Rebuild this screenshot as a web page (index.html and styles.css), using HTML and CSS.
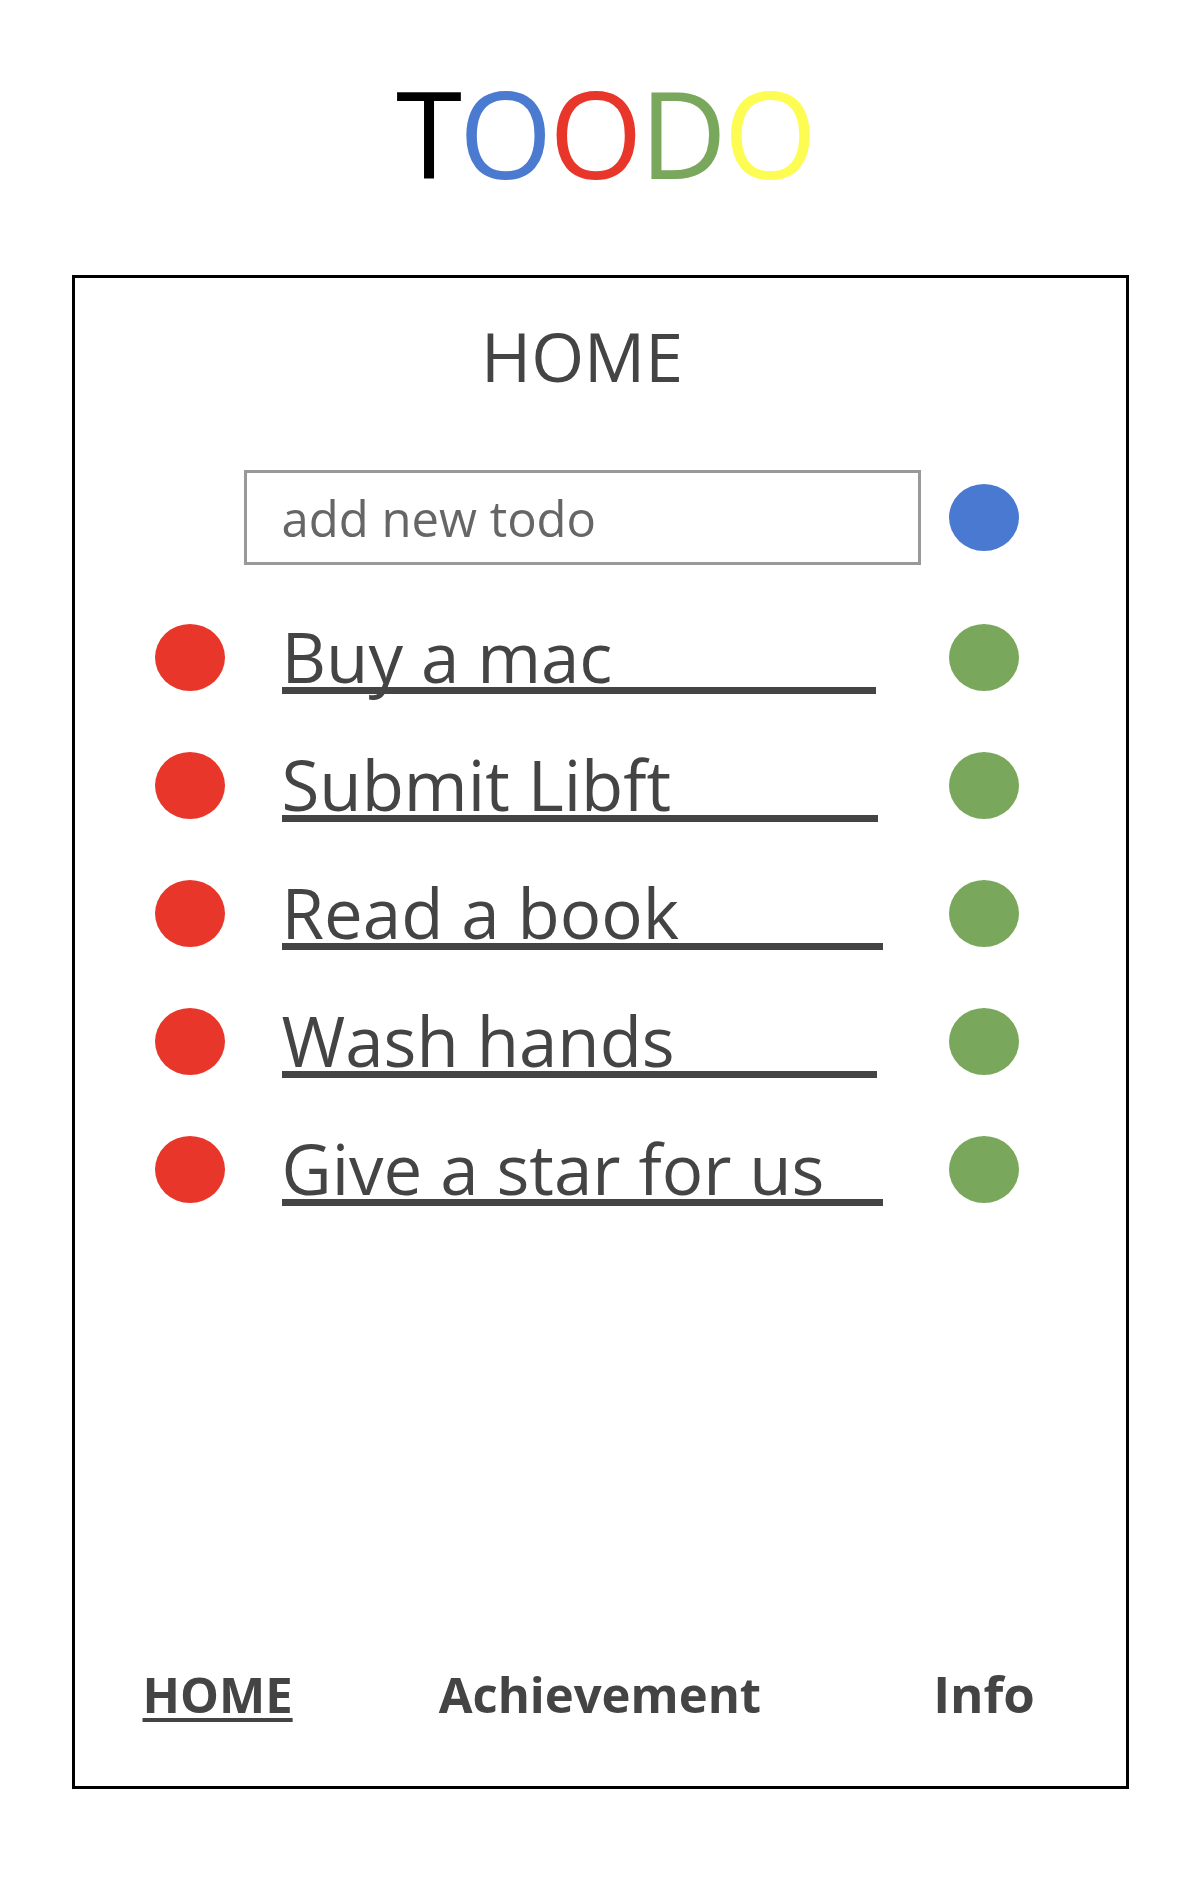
FILE: index.html
```html
<!DOCTYPE html>
<html lang="en">
<head>
<meta charset="utf-8">
<title>TOODO</title>
<link rel="stylesheet" href="styles.css">
</head>
<body>
<h1 class="logo"><span class="l-black">T</span><span class="l-blue">O</span><span class="l-red">O</span><span class="l-green">D</span><span class="l-yellow">O</span></h1>
<main class="panel">
  <h2 class="panel-title">HOME</h2>
  <div class="add-row">
    <input class="add-input" type="text" placeholder="add new todo">
    <span class="dot dot-blue"></span>
  </div>
  <ul class="todos">
    <li class="todo"><span class="dot dot-red"></span><span class="todo-text">Buy a mac</span><span class="dot dot-green"></span></li>
    <li class="todo"><span class="dot dot-red"></span><span class="todo-text">Submit Libft</span><span class="dot dot-green"></span></li>
    <li class="todo"><span class="dot dot-red"></span><span class="todo-text">Read a book</span><span class="dot dot-green"></span></li>
    <li class="todo"><span class="dot dot-red"></span><span class="todo-text">Wash hands</span><span class="dot dot-green"></span></li>
    <li class="todo"><span class="dot dot-red"></span><span class="todo-text">Give a star for us</span><span class="dot dot-green"></span></li>
  </ul>
  <nav class="nav">
    <a class="nav-link nav-home active">HOME</a>
    <a class="nav-link nav-ach">Achievement</a>
    <a class="nav-link nav-info">Info</a>
  </nav>
</main>
</body>
</html>
```
FILE: styles.css
```css
html, body {
  margin: 0;
  padding: 0;
  background: #ffffff;
}
body {
  font-family: "Open Sans", "Noto Sans", "Liberation Sans", sans-serif;
  color: #444444;
}
.logo {
  margin: 0;
  padding: 73px 0 0 10px;
  font-size: 120px;
  line-height: 1;
  font-weight: 400;
  text-align: center;
  letter-spacing: -3px;
}
.l-black { color: #000000; }
.l-blue { color: #4a7bd1; }
.l-red { color: #e8372a; }
.l-green { color: #79a75b; }
.l-yellow { color: #fdfc52; }

.panel {
  box-sizing: border-box;
  width: 1057px;
  height: 1514px;
  margin: 82px auto 0;
  border: 3px solid #000000;
  padding-top: 44px;
  display: flex;
  flex-direction: column;
}
.panel-title {
  margin: 0;
  padding-right: 36px;
  font-size: 68px;
  line-height: 1;
  font-weight: 400;
  text-align: center;
  color: #444444;
}
.add-row {
  margin-top: 80px;
  padding-left: 169px;
  display: flex;
  align-items: center;
}
.add-input {
  box-sizing: border-box;
  width: 677px;
  height: 95px;
  border: 3px solid #999999;
  border-radius: 0;
  padding: 0 0 0 35px;
  margin: 0;
  font-family: "Open Sans", "Noto Sans", sans-serif;
  font-size: 49px;
  color: #444444;
  background: #ffffff;
  outline: none;
}
.add-input::placeholder {
  color: #666666;
  opacity: 1;
}
.dot {
  display: block;
  width: 70px;
  height: 67px;
  border-radius: 50%;
}
.dot-blue { background: #4a79d1; margin-left: 28px; flex: none; }
.dot-red { background: #e8372a; }
.dot-green { background: #79a75b; }

.todos {
  list-style: none;
  width: 864px;
  margin: 59px 0 0;
  padding: 0 0 0 80px;
  display: flex;
  flex-direction: column;
  gap: 58px;
}
.todo {
  display: grid;
  grid-template-columns: 70px 1fr 70px;
  align-items: start;
  height: 70px;
}
.todo-text {
  display: block;
  justify-self: start;
  width: 596px;
  margin-left: 57px;
  margin-top: 2px;
  font-size: 69px;
  line-height: 0.88;
  white-space: nowrap;
  border-bottom: 7px solid #444444;
  color: #444444;
}
.todo:nth-child(1) .todo-text { width: 594px; }
.todo:nth-child(2) .todo-text { width: 596px; }
.todo:nth-child(3) .todo-text { width: 601px; }
.todo:nth-child(4) .todo-text { width: 595px; }
.todo:nth-child(5) .todo-text { width: 601px; }

.nav {
  margin-top: auto;
  padding: 0 0 67px 68px;
  display: flex;
  align-items: flex-end;
}
.nav-link {
  font-size: 49px;
  line-height: 1;
  font-weight: 700;
  color: #444444;
  text-decoration: none;
}
.nav-link.active {
  text-decoration: underline;
  text-decoration-thickness: 4px;
  text-underline-offset: 5px;
}
.nav-ach { margin-left: 146px; }
.nav-info { margin-left: 172px; font-size: 51px; }
```
